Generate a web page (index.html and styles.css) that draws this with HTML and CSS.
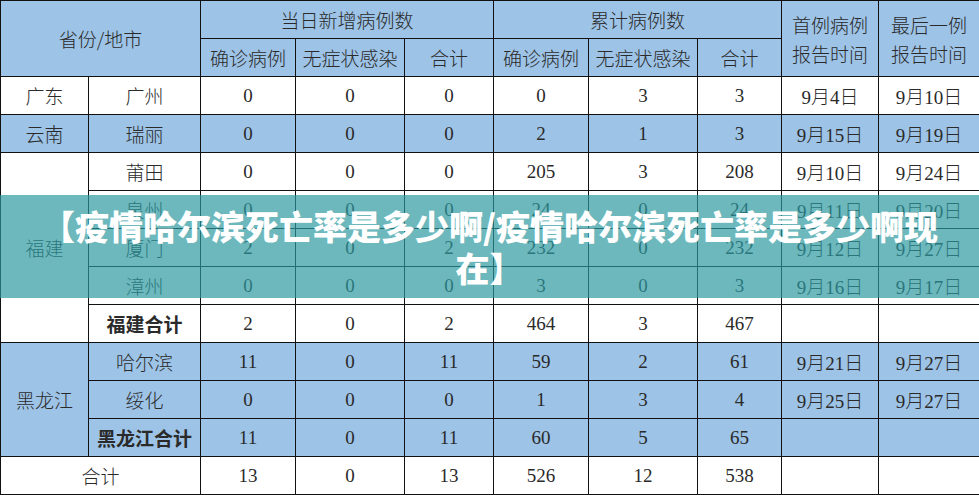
FILE: index.html
```html
<!DOCTYPE html>
<html lang="zh-CN">
<head>
<meta charset="utf-8">
<title>疫情统计</title>
<link rel="stylesheet" href="styles.css">
</head>
<body>
<div class="page">
  <table class="stats">
    <colgroup>
      <col class="c-prov"><col class="c-city">
      <col class="c-a"><col class="c-b"><col class="c-c">
      <col class="c-d"><col class="c-e"><col class="c-f">
      <col class="c-g"><col class="c-h">
    </colgroup>
    <thead>
      <tr class="blue">
        <th colspan="2" rowspan="2">省份/地市</th>
        <th colspan="3">当日新增病例数</th>
        <th colspan="3">累计病例数</th>
        <th rowspan="2" class="two">首例病例<br>报告时间</th>
        <th rowspan="2" class="two">最后一例<br>报告时间</th>
      </tr>
      <tr class="blue">
        <th>确诊病例</th><th>无症状感染</th><th>合计</th>
        <th>确诊病例</th><th>无症状感染</th><th>合计</th>
      </tr>
    </thead>
    <tbody>
      <tr>
        <td>广东</td><td>广州</td>
        <td class="n">0</td><td class="n">0</td><td class="n">0</td>
        <td class="n">0</td><td class="n">3</td><td class="n">3</td>
        <td class="n">9月4日</td><td class="n">9月10日</td>
      </tr>
      <tr class="blue">
        <td>云南</td><td>瑞丽</td>
        <td class="n">0</td><td class="n">0</td><td class="n">0</td>
        <td class="n">2</td><td class="n">1</td><td class="n">3</td>
        <td class="n">9月15日</td><td class="n">9月19日</td>
      </tr>
      <tr>
        <td rowspan="5">福建</td><td>莆田</td>
        <td class="n">0</td><td class="n">0</td><td class="n">0</td>
        <td class="n">205</td><td class="n">3</td><td class="n">208</td>
        <td class="n">9月10日</td><td class="n">9月24日</td>
      </tr>
      <tr>
        <td>泉州</td>
        <td class="n">0</td><td class="n">0</td><td class="n">0</td>
        <td class="n">24</td><td class="n">0</td><td class="n">24</td>
        <td class="n">9月11日</td><td class="n">9月20日</td>
      </tr>
      <tr>
        <td>厦门</td>
        <td class="n">2</td><td class="n">0</td><td class="n">2</td>
        <td class="n">232</td><td class="n">0</td><td class="n">232</td>
        <td class="n">9月12日</td><td class="n">9月27日</td>
      </tr>
      <tr>
        <td>漳州</td>
        <td class="n">0</td><td class="n">0</td><td class="n">0</td>
        <td class="n">3</td><td class="n">0</td><td class="n">3</td>
        <td class="n">9月16日</td><td class="n">9月17日</td>
      </tr>
      <tr>
        <td class="bold">福建合计</td>
        <td class="n">2</td><td class="n">0</td><td class="n">2</td>
        <td class="n">464</td><td class="n">3</td><td class="n">467</td>
        <td></td><td></td>
      </tr>
      <tr class="blue">
        <td rowspan="3">黑龙江</td><td>哈尔滨</td>
        <td class="n">11</td><td class="n">0</td><td class="n">11</td>
        <td class="n">59</td><td class="n">2</td><td class="n">61</td>
        <td class="n">9月21日</td><td class="n">9月27日</td>
      </tr>
      <tr class="blue">
        <td>绥化</td>
        <td class="n">0</td><td class="n">0</td><td class="n">0</td>
        <td class="n">1</td><td class="n">3</td><td class="n">4</td>
        <td class="n">9月25日</td><td class="n">9月27日</td>
      </tr>
      <tr class="blue">
        <td class="bold">黑龙江合计</td>
        <td class="n">11</td><td class="n">0</td><td class="n">11</td>
        <td class="n">60</td><td class="n">5</td><td class="n">65</td>
        <td></td><td></td>
      </tr>
      <tr>
        <td colspan="2">合计</td>
        <td class="n">13</td><td class="n">0</td><td class="n">13</td>
        <td class="n">526</td><td class="n">12</td><td class="n">538</td>
        <td></td><td></td>
      </tr>
    </tbody>
  </table>
  <div class="banner">
    <h1 class="banner-title">【疫情哈尔滨死亡率是多少啊/疫情哈尔滨死亡率是多少啊现在】</h1>
  </div>
</div>
</body>
</html>
```

FILE: styles.css
```css
html, body {
  margin: 0;
  padding: 0;
  background: #ffffff;
}

.page {
  position: relative;
  width: 979px;
  height: 495px;
  overflow: hidden;
}

.stats {
  width: 979px;
  border-collapse: collapse;
  table-layout: fixed;
  font-family: "Liberation Serif", "Noto Sans CJK SC", serif;
  font-size: 19px;
  font-weight: 300;
  color: #2a2a2a;
}

.c-prov { width: 88px; }
.c-city { width: 112px; }
.c-a { width: 95px; }
.c-b { width: 109px; }
.c-c { width: 89px; }
.c-d { width: 95px; }
.c-e { width: 109px; }
.c-f { width: 84px; }
.c-g { width: 97px; }
.c-h { width: 101px; }

.stats tr {
  height: 38px;
}

.stats th,
.stats td {
  border: 1px solid #111;
  padding: 0;
  text-align: center;
  vertical-align: middle;
  font-weight: 300;
  white-space: nowrap;
}

.stats th {
  font-family: "Noto Sans CJK SC", sans-serif;
}

.stats td {
  font-family: "Noto Sans CJK SC", sans-serif;
}

.stats td.n {
  font-family: "Liberation Serif", "Noto Sans CJK SC", serif;
}

.stats th.two {
  line-height: 29px;
}

.stats td.bold {
  font-weight: 700;
}

.blue {
  background: #9dc3e6;
}

.banner {
  position: absolute;
  left: 0;
  top: 195px;
  width: 979px;
  height: 103px;
  background: rgba(43, 152, 159, 0.69);
  display: flex;
  align-items: center;
  justify-content: center;
  padding: 0 30px;
  box-sizing: border-box;
}

.banner-title {
  margin: 0;
  max-width: 900px;
  font-family: "Noto Sans CJK SC", sans-serif;
  font-size: 34px;
  font-weight: 900;
  line-height: 42px;
  color: #ffffff;
  text-align: center;
}
```
